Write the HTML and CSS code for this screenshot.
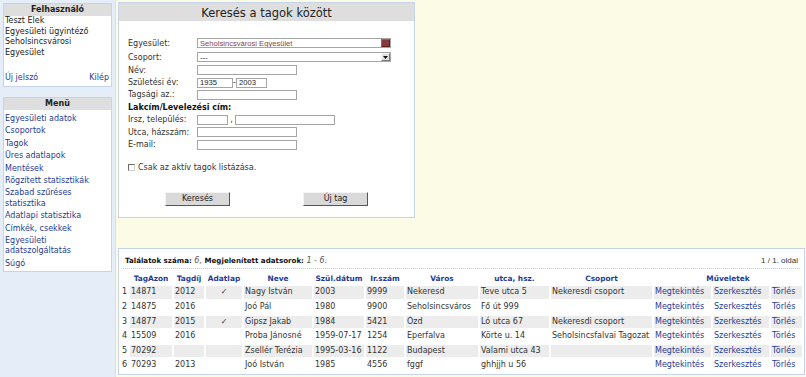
FILE: index.html
```html
<!DOCTYPE html>
<html lang="hu">
<head>
    <meta charset="UTF-8">
    <title>Tagok keresése</title>
    <link rel="stylesheet" href="styles.css">
</head>
<body>
<div class="page">

    <div class="sidebar">
        <div class="box user-box">
            <div class="box-title">Felhasználó</div>
            <div class="user-info">
                Teszt Elek<br>
                Egyesületi ügyintéző<br>
                Seholsincsvárosi Egyesület
            </div>
            <div class="user-links">
                <a href="#">Új jelszó</a>
                <a href="#">Kilép</a>
            </div>
        </div>

        <div class="box menu-box">
            <div class="box-title">Menü</div>
            <ul class="menu">
                <li><a href="#">Egyesületi adatok</a></li>
                <li><a href="#">Csoportok</a></li>
                <li><a href="#">Tagok</a></li>
                <li><a href="#">Üres adatlapok</a></li>
                <li><a href="#">Mentések</a></li>
                <li><a href="#">Rögzített statisztikák</a></li>
                <li><a href="#">Szabad szűréses statisztika</a></li>
                <li><a href="#">Adatlapi statisztika</a></li>
                <li><a href="#">Címkék, csekkek</a></li>
                <li><a href="#">Egyesületi adatszolgáltatás</a></li>
                <li><a href="#">Súgó</a></li>
            </ul>
        </div>
    </div>

    <div class="main">
        <div class="search-panel">
            <div class="panel-title">Keresés a tagok között</div>
            <form class="search-form">
                <div class="form-row row-tall">
                    <label class="form-label">Egyesület:</label>
                    <span class="select-wrap">
                        <select class="select select-active"><option>Seholsincsvárosi Egyesület</option></select>
                        <span class="select-arrow arrow-active"></span>
                    </span>
                </div>
                <div class="form-row row-tall">
                    <label class="form-label">Csoport:</label>
                    <span class="select-wrap">
                        <select class="select"><option>---</option></select>
                        <span class="select-arrow">
                            <svg width="5" height="3" viewBox="0 0 5 3"><polygon points="0,0 5,0 2.5,3" fill="#111"/></svg>
                        </span>
                    </span>
                </div>
                <div class="form-row">
                    <label class="form-label">Név:</label>
                    <input class="field field-wide" type="text">
                </div>
                <div class="form-row">
                    <label class="form-label">Születési év:</label>
                    <input class="field field-year" type="text" value="1935">
                    <span class="sep">-</span>
                    <input class="field field-year2" type="text" value="2003">
                </div>
                <div class="form-row">
                    <label class="form-label">Tagsági az.:</label>
                    <input class="field field-wide" type="text">
                </div>
                <div class="form-row section-label">Lakcím/Levelezési cím:</div>
                <div class="form-row">
                    <label class="form-label">Irsz, település:</label>
                    <input class="field field-zip" type="text">
                    <span class="sep comma">,</span>
                    <input class="field field-wide" type="text">
                </div>
                <div class="form-row">
                    <label class="form-label">Utca, házszám:</label>
                    <input class="field field-wide" type="text">
                </div>
                <div class="form-row">
                    <label class="form-label">E-mail:</label>
                    <input class="field field-wide" type="text">
                </div>

                <label class="form-row check-row">
                    <input class="check" type="checkbox">
                    Csak az aktív tagok listázása.
                </label>

                <div class="button-row">
                    <button class="btn" type="button">Keresés</button>
                    <button class="btn" type="button">Új tag</button>
                </div>
            </form>
        </div>

        <div class="results">
            <div class="results-head">
                <span>
                    <span class="count-label">Találatok száma:</span>
                    <span class="count-num">6,</span>
                    <span class="count-label">Megjelenített adatsorok:</span>
                    <span class="count-num">1 - 6.</span>
                </span>
                <span class="page-info">1 / 1. oldal</span>
            </div>
            <table class="result-table">
                <colgroup>
                    <col style="width:7px"><col style="width:42px"><col style="width:30px">
                    <col style="width:36px"><col style="width:68px"><col style="width:50px">
                    <col style="width:38px"><col style="width:72px"><col style="width:69px">
                    <col style="width:101px"><col style="width:57px"><col style="width:56px">
                    <col style="width:31px">
                </colgroup>
                <thead>
                    <tr>
                        <th></th>
                        <th>TagAzon</th>
                        <th>Tagdíj</th>
                        <th>Adatlap</th>
                        <th>Neve</th>
                        <th>Szül.dátum</th>
                        <th>Ir.szám</th>
                        <th>Város</th>
                        <th>utca, hsz.</th>
                        <th>Csoport</th>
                        <th colspan="3">Műveletek</th>
                    </tr>
                </thead>
                <tbody id="memberRows">
                </tbody>
            </table>
        </div>
    </div>

</div>

<script>
    const members = [
        ['14871', '2012', true, 'Nagy István', '2003', '9999', 'Nekeresd', 'Teve utca 5', 'Nekeresdi csoport'],
        ['14875', '2016', false, 'Joó Pál', '1980', '9900', 'Seholsincsváros', 'Fő út 999', ''],
        ['14877', '2015', true, 'Gipsz Jakab', '1984', '5421', 'Ózd', 'Ló utca 67', 'Nekeresdi csoport'],
        ['15509', '2016', false, 'Proba Jánosné', '1959-07-17', '1254', 'Eperfalva', 'Körte u. 14', 'Seholsincsfalvai Tagozat'],
        ['70292', '', false, 'Zsellér Terézia', '1995-03-16', '1122', 'Budapest', 'Valami utca 43', ''],
        ['70293', '2013', false, 'Joó István', '1985', '4556', 'fggf', 'ghhjjh u 56', '']
    ];

    let tableBody = document.getElementById('memberRows');
    members.forEach((m, i) => {
        let row = `<tr>
            <td class="num">${i + 1}</td>
            <td>${m[0]}</td>
            <td>${m[1]}</td>
            <td class="check-cell">${m[2] ? '✓' : ''}</td>
            <td>${m[3]}</td>
            <td>${m[4]}</td>
            <td>${m[5]}</td>
            <td>${m[6]}</td>
            <td>${m[7]}</td>
            <td>${m[8]}</td>
            <td><a href="#">Megtekintés</a></td>
            <td><a href="#">Szerkesztés</a></td>
            <td><a href="#">Törlés</a></td>
        </tr>`;
        tableBody.innerHTML += row;
    });
</script>
</body>
</html>
```

FILE: styles.css
```css
body {
    margin: 0;
    font-family: "DejaVu Sans", Verdana, sans-serif;
    font-size: 8px;
    color: #333;
    background: #fcfbe6;
}

a {
    color: #1f3b94;
    text-decoration: none;
}

.page {
    display: flex;
    min-height: 100vh;
}

/* bal oldali sáv */
.sidebar {
    width: 115px;
    flex: none;
    background: #e5edf8;
    border-right: 1px solid #d3dfee;
    padding-top: 3px;
}

.box {
    margin: 0 3px;
    background: white;
    border: 1px solid #c5d4e8;
}

.box-title {
    height: 12px;
    line-height: 12px;
    background: #dedede;
    color: #222;
    font-weight: bold;
    text-align: center;
}

.user-info {
    padding: 0 1px;
    line-height: 10.7px;
    color: #222;
}

.user-links {
    display: flex;
    justify-content: space-between;
    margin-top: 14px;
    padding: 0 2px 2px 1px;
    line-height: 10.7px;
}

.menu-box {
    margin-top: 10.5px;
}

.menu {
    list-style: none;
    margin: 3px 0 0;
    padding: 0 0 1px;
}

.menu li {
    padding: 1px 0 1px 1px;
    line-height: 10.4px;
}

/* tartalom */
.main {
    flex: 1;
    padding: 2px 1px 0 2px;
}

.search-panel {
    width: 297px;
    box-sizing: border-box;
    background: white;
    border: 1px solid #c5d4e8;
    padding-bottom: 11.5px;
}

.panel-title {
    height: 18px;
    line-height: 20px;
    background: #dedede;
    color: #222;
    font-size: 11.5px;
    text-align: center;
}

.search-form {
    padding: 15px 0 0 9px;
}

.form-row {
    display: flex;
    align-items: center;
    height: 12.4px;
    color: #333;
}

.row-tall {
    height: 14px;
}

.form-label {
    width: 69px;
    flex: none;
}

.section-label {
    font-weight: bold;
    color: #111;
}

.select-wrap {
    position: relative;
    display: inline-block;
    height: 10px;
}

.select {
    appearance: none;
    width: 194px;
    height: 10px;
    box-sizing: border-box;
    margin: 0;
    padding: 0 2px;
    border: 1px solid #a5a5a5;
    background: white;
    font: 7.6px "Liberation Sans", Arial, sans-serif;
    color: #222;
    display: block;
}

.select-active {
    color: #8a4646;
}

.select-arrow {
    position: absolute;
    right: 1px;
    top: 1px;
    width: 9px;
    height: 8px;
    box-sizing: border-box;
    background: #e2e2e2;
    border: 1px solid;
    border-color: #f5f5f5 #777 #777 #f5f5f5;
    display: flex;
    align-items: center;
    justify-content: center;
}

.arrow-active {
    background: #86393a;
    border-color: #a65a5a #5a2020 #5a2020 #a65a5a;
}

.field {
    height: 10px;
    box-sizing: border-box;
    margin: 0;
    padding: 0 2px;
    border: 1px solid #a5a5a5;
    background: white;
    font: 7.6px "Liberation Sans", Arial, sans-serif;
    color: #222;
}

.field-wide {
    width: 100px;
}

.field-year {
    width: 36px;
}

.field-year2 {
    width: 31px;
}

.field-zip {
    width: 31px;
}

.sep {
    width: 3px;
    text-align: center;
}

.comma {
    width: 7px;
}

.check-row {
    margin-top: 11px;
}

.check {
    appearance: none;
    width: 7px;
    height: 7px;
    margin: 0 3px 0 0;
    border: 1px solid;
    border-color: #666 #d0d0d0 #d0d0d0 #666;
    background: white;
}

.button-row {
    display: flex;
    gap: 73px;
    margin: 17.8px 0 0 37px;
}

.btn {
    width: 65px;
    height: 14px;
    padding: 0;
    background: #d9d9d9;
    border: 1px solid;
    border-color: #f4f4f4 #555 #555 #f4f4f4;
    font: 8px "DejaVu Sans", Verdana, sans-serif;
    color: #222;
}

/* találati lista */
.results {
    margin-top: 29.5px;
    background: white;
    border: 1px solid #c5d4e8;
}

.results-head {
    display: flex;
    justify-content: space-between;
    align-items: center;
    margin: 0 4px;
    padding: 6px 2px 2px;
    line-height: 11px;
    border-bottom: 1px dotted #c8c8c8;
}

.count-label {
    font-size: 7.1px;
    font-weight: bold;
    color: #111;
}

.count-num {
    font-style: italic;
    color: #555;
}

.page-info {
    font: 8px "Liberation Sans", Arial, sans-serif;
    color: #333;
}

.result-table {
    width: 100%;
    margin-top: 2.5px;
    table-layout: fixed;
    border-spacing: 2px;
}

.result-table th {
    padding: 0;
    line-height: 11px;
    font-size: 7.4px;
    font-weight: bold;
    color: #1f3b94;
    text-align: center;
    white-space: nowrap;
}

.result-table td {
    padding: 0;
    text-indent: 1px;
    line-height: 12.6px;
    white-space: nowrap;
    overflow: hidden;
    color: #333;
}

.result-table tbody tr:nth-child(odd) td {
    background: #ececec;
}

.result-table tbody tr td.num {
    background: none;
}

.result-table td.check-cell {
    text-align: center;
    text-indent: 0;
}
```
